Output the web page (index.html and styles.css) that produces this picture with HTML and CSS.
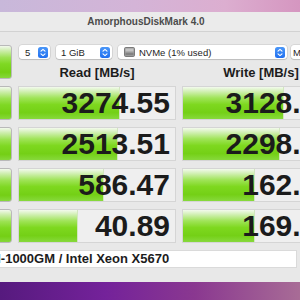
FILE: index.html
```html
<!DOCTYPE html>
<html lang="en">
<head>
    <meta charset="UTF-8">
    <title>AmorphousDiskMark 4.0</title>
    <link rel="stylesheet" href="styles.css">
</head>
<body>
    <div class="window">
        <div class="titlebar">AmorphousDiskMark 4.0</div>
        <div class="board">
            <div class="btn btn-all"></div>
            <div class="toolbar">
                <div class="popup popup-count"><span class="label">5</span><span class="stepper"></span></div>
                <div class="popup popup-size"><span class="label">1 GiB</span><span class="stepper"></span></div>
                <div class="popup popup-disk">
                    <svg class="disk" width="11" height="10" viewBox="0 0 11 10">
                        <rect x="0.5" y="0.5" width="10" height="9" rx="1.2" fill="#9a9a9a" stroke="#7a7a7a"/>
                        <rect x="1.5" y="1.5" width="8" height="3" fill="#c4c4c4"/>
                        <rect x="1.5" y="6" width="8" height="2" fill="#838383"/>
                    </svg>
                    <span class="label">NVMe (1% used)</span><span class="stepper"></span>
                </div>
                <div class="popup popup-unit"><span class="label">MB/s</span><span class="stepper"></span></div>
            </div>
            <div class="head">Read [MB/s]</div>
            <div class="head">Write [MB/s]</div>

            <div class="btn"></div>
            <div class="cell"><div class="bar" style="width: 100px"></div><span class="val">3274.55</span></div>
            <div class="cell"><div class="bar" style="width: 100px"></div><span class="val">3128.77</span></div>

            <div class="btn"></div>
            <div class="cell"><div class="bar" style="width: 98px"></div><span class="val">2513.51</span></div>
            <div class="cell"><div class="bar" style="width: 96px"></div><span class="val">2298.42</span></div>

            <div class="btn"></div>
            <div class="cell"><div class="bar" style="width: 84px"></div><span class="val">586.47</span></div>
            <div class="cell"><div class="bar" style="width: 71px"></div><span class="val">162.35</span></div>

            <div class="btn"></div>
            <div class="cell"><div class="bar" style="width: 58px"></div><span class="val">40.89</span></div>
            <div class="cell"><div class="bar" style="width: 71px"></div><span class="val">169.58</span></div>

            <div class="footer">M-1000GM / Intel Xeon X5670</div>
        </div>
    </div>
</body>
</html>
```

FILE: styles.css
```css
html {
    height: 100%;
}

body {
    margin: 0;
    height: 100%;
    overflow: hidden;
    font-family: "Liberation Sans", Arial, sans-serif;
    background:
        linear-gradient(90deg, #c8b8da 0%, #d4b4d7 45%, #dcaed0 75%, #d596c0 100%) top / 100% 40px no-repeat,
        linear-gradient(90deg, #561a7e 0%, #74229a 35%, #8a3890 65%, #a86c96 100%) bottom / 100% 40px no-repeat,
        #9a6aa8;
}

/* window hangs off both edges of the screen */
.window {
    margin: 12px 0 0 -58px;
    width: 408px;
    background-color: #e8e8e8;
    padding-bottom: 14px;
}

.titlebar {
    height: 19px;
    line-height: 19px;
    text-align: center;
    font-size: 10px;
    font-weight: bold;
    color: #4b4b4b;
    background-color: #ebebeb;
    border-bottom: 1px solid #d2d2d2;
}

.board {
    display: grid;
    grid-template-columns: 60px 158px 158px;
    grid-template-rows: 14px 13px 34px 34px 34px 34px 18px;
    column-gap: 6px;
    row-gap: 7px;
    padding: 13px 0 0 10px;
}

.btn {
    box-sizing: border-box;
    border: 1px solid #b9b9b9;
    border-radius: 3px;
    background: linear-gradient(#f2f9ec 0%, #cfeeb0 14%, #9ce253 36%, #7fd823 56%, #74cf15 82%, #86d83b 100%);
}

.btn-all {
    grid-row: 1 / 3;
    height: 34px;
}

.toolbar {
    grid-column: 2 / 4;
    display: flex;
    gap: 6px;
    align-items: center;
    margin-left: 1px;
}

.popup {
    box-sizing: border-box;
    height: 14px;
    display: flex;
    align-items: center;
    background-color: #fff;
    border-radius: 3px;
    box-shadow: 0 0 0 0.5px rgba(0, 0, 0, 0.14), 0 1px 1px rgba(0, 0, 0, 0.12);
    font-size: 9.5px;
    color: #1e1e1e;
    padding: 0 2px 0 6px;
    flex: none;
}

.popup .label {
    flex: 1;
    white-space: nowrap;
}

.popup-count { width: 31px; }
.popup-size { width: 56px; padding-left: 5px; }
.popup-disk { width: 169px; padding-left: 6px; }
.popup-unit { width: 60px; margin-left: -2px; padding-left: 2px; }

.disk {
    margin-right: 4px;
}

.stepper {
    width: 10px;
    height: 11px;
    border-radius: 2.5px;
    background:
        url("data:image/svg+xml;utf8,<svg xmlns='http://www.w3.org/2000/svg' width='10' height='11'><path d='M3 4.2 L5 2.4 L7 4.2 M3 6.8 L5 8.6 L7 6.8' fill='none' stroke='white' stroke-width='1.1' stroke-linecap='round' stroke-linejoin='round'/></svg>") center no-repeat,
        linear-gradient(#4b97f8, #1f6ff0);
}

.head {
    font-size: 13px;
    font-weight: bold;
    line-height: 13px;
    color: #1c1c1c;
    text-align: center;
}

.cell {
    position: relative;
    box-sizing: border-box;
    border: 1px solid #d5d5d5;
    background-color: #efefef;
    text-align: right;
    padding-right: 5px;
    font-size: 30px;
    font-weight: bold;
    line-height: 32px;
    color: #1b1b1b;
    overflow: hidden;
    white-space: nowrap;
}

.bar {
    position: absolute;
    left: 0;
    top: 0;
    bottom: 0;
    border-right: 1px solid #d2e6c0;
    background: linear-gradient(#f3faed 0%, #d6f1bc 12%, #a0e459 34%, #7ed81f 55%, #74d016 80%, #87d93c 100%);
}

.val {
    position: relative;
}

.footer {
    grid-column: 1 / 4;
    width: 345px;
    box-sizing: border-box;
    background-color: #fff;
    border: 1px solid #dadada;
    font-size: 13px;
    font-weight: bold;
    line-height: 16px;
    color: #1c1c1c;
    padding-left: 37px;
    white-space: nowrap;
}
```
